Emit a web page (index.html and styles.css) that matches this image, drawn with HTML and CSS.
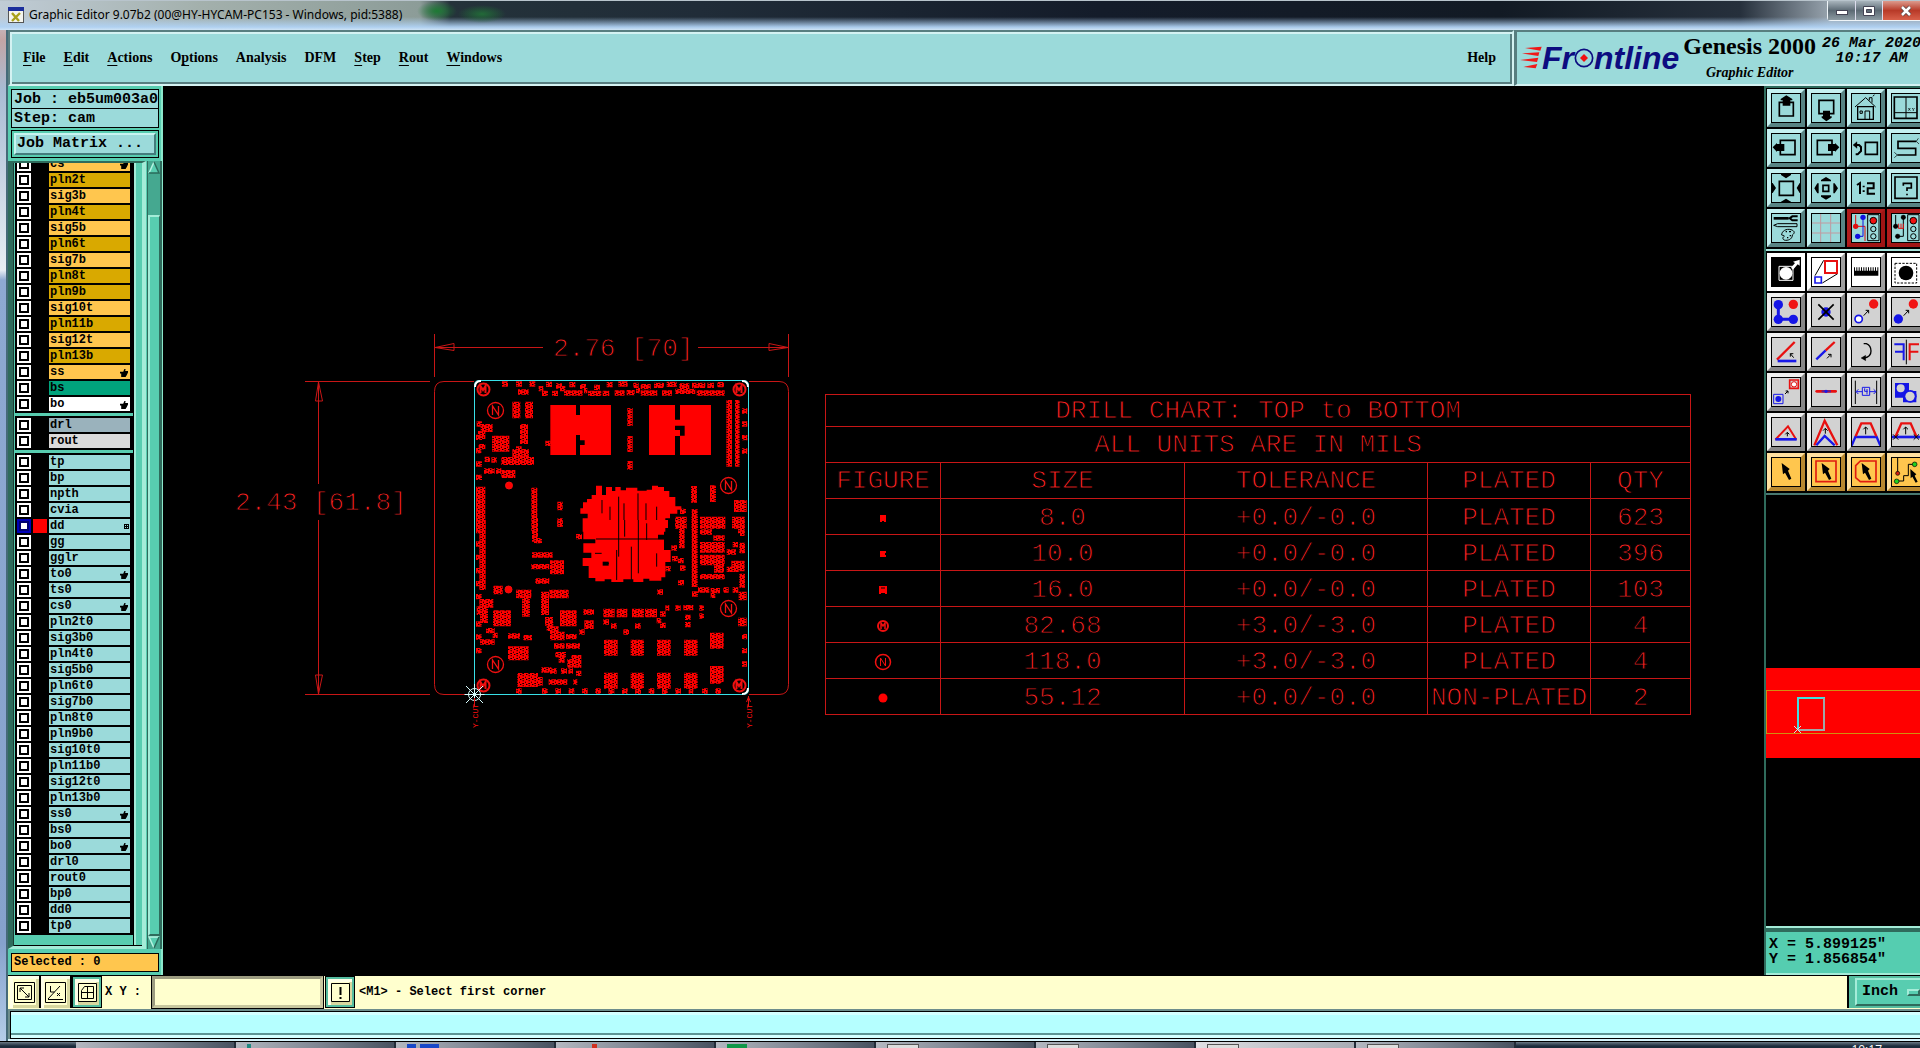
FILE: index.html
```html
<!DOCTYPE html>
<html lang="en">
<head>
<meta charset="utf-8">
<title>Graphic Editor 9.07b2</title>
<link rel="stylesheet" href="styles.css">
</head>
<body>
<header class="titlebar">
  <svg class="appicon" width="16" height="16" viewBox="0 0 16 16"><rect x=".5" y=".5" width="15" height="15" fill="#f4f4ee" stroke="#555"/><rect width="16" height="4" fill="#1b2e9c"/><path d="M4 6l7 8M12 6l-8 8" stroke="#a8a01a" stroke-width="2.4"/></svg>
  <h1>Graphic Editor 9.07b2 (00@HY-HYCAM-PC153 - Windows, pid:5388)</h1>
  <div class="winbuttons">
    <button class="min" aria-label="Minimize"><svg width="14" height="12"><rect x="1.500" y="5.500" width="11" height="4" fill="#fff" stroke="#445"/></svg></button>
    <button class="max" aria-label="Maximize"><svg width="14" height="12"><path fill="#fff" stroke="#445" fill-rule="evenodd" d="M1.500 1.500h11v9h-11zM4.500 4.500h5v3h-5z"/></svg></button>
    <button class="close" aria-label="Close"><svg width="14" height="12"><path d="M3 2l8 8M11 2l-8 8" stroke="#544" stroke-width="4"/><path d="M3 2l8 8M11 2l-8 8" stroke="#fff" stroke-width="2.500"/></svg></button>
  </div>
</header>

<div class="window">
  <div class="top">
    <nav class="menubar">
      <button><u>F</u>ile</button><button><u>E</u>dit</button><button><u>A</u>ctions</button><button>O<u>p</u>tions</button><button>Analysis</button><button>DFM</button><button><u>S</u>tep</button><button><u>R</u>out</button><button><u>W</u>indows</button>
      <button class="help">Help</button>
    </nav>
    <div class="brand">
      <div class="logo">
        <svg width="22" height="24" viewBox="0 0 66 72"><g fill="#f01818"><path d="M15 6l50-4-4 12zM6 22l52-3-3 11zM0 42l55-7-4 13zM10 63l42-9-5 13z"/></g></svg>
        <span>Fr</span><svg width="20" height="22" viewBox="0 0 60 66"><circle cx="30" cy="36" r="26" fill="none" stroke="#0c0c80" stroke-width="5"/><path d="M30 24l12 12-12 12-12-12z" fill="#f01010"/></svg><span>ntline</span>
      </div>
      <div class="product"><strong>Genesis 2000</strong><em>Graphic Editor</em></div>
      <div class="clock"><span>26 Mar 2020</span><span>10:17 AM</span></div>
    </div>
  </div>

  <div class="main">
    <aside class="layers">
      <div class="info">Job : eb5um003a0</div>
      <div class="info second">Step: cam</div>
      <div class="matrix"><button>Job Matrix ...</button></div>
      <div class="scroller">
        <div class="list">
          <ul>
            <li class="sig hand"><label><input type="checkbox"><i></i><b>cs</b></label></li>
            <li class="pln"><label><input type="checkbox"><i></i><b>pln2t</b></label></li>
            <li class="sig"><label><input type="checkbox"><i></i><b>sig3b</b></label></li>
            <li class="pln"><label><input type="checkbox"><i></i><b>pln4t</b></label></li>
            <li class="sig"><label><input type="checkbox"><i></i><b>sig5b</b></label></li>
            <li class="pln"><label><input type="checkbox"><i></i><b>pln6t</b></label></li>
            <li class="sig"><label><input type="checkbox"><i></i><b>sig7b</b></label></li>
            <li class="pln"><label><input type="checkbox"><i></i><b>pln8t</b></label></li>
            <li class="pln"><label><input type="checkbox"><i></i><b>pln9b</b></label></li>
            <li class="sig"><label><input type="checkbox"><i></i><b>sig10t</b></label></li>
            <li class="pln"><label><input type="checkbox"><i></i><b>pln11b</b></label></li>
            <li class="sig"><label><input type="checkbox"><i></i><b>sig12t</b></label></li>
            <li class="pln"><label><input type="checkbox"><i></i><b>pln13b</b></label></li>
            <li class="sig hand"><label><input type="checkbox"><i></i><b>ss</b></label></li>
            <li class="green"><label><input type="checkbox"><i></i><b>bs</b></label></li>
            <li class="white hand"><label><input type="checkbox"><i></i><b>bo</b></label></li>
          </ul>
          <ul>
            <li class="drill"><label><input type="checkbox"><i></i><b>drl</b></label></li>
            <li class="rout"><label><input type="checkbox"><i></i><b>rout</b></label></li>
          </ul>
          <ul>
            <li><label><input type="checkbox"><i></i><b>tp</b></label></li>
            <li><label><input type="checkbox"><i></i><b>bp</b></label></li>
            <li><label><input type="checkbox"><i></i><b>npth</b></label></li>
            <li><label><input type="checkbox"><i></i><b>cvia</b></label></li>
            <li class="current"><label><input type="checkbox" checked><i></i><b>dd</b></label></li>
            <li><label><input type="checkbox"><i></i><b>gg</b></label></li>
            <li><label><input type="checkbox"><i></i><b>gglr</b></label></li>
            <li class="hand"><label><input type="checkbox"><i></i><b>to0</b></label></li>
            <li><label><input type="checkbox"><i></i><b>ts0</b></label></li>
            <li class="hand"><label><input type="checkbox"><i></i><b>cs0</b></label></li>
            <li><label><input type="checkbox"><i></i><b>pln2t0</b></label></li>
            <li><label><input type="checkbox"><i></i><b>sig3b0</b></label></li>
            <li><label><input type="checkbox"><i></i><b>pln4t0</b></label></li>
            <li><label><input type="checkbox"><i></i><b>sig5b0</b></label></li>
            <li><label><input type="checkbox"><i></i><b>pln6t0</b></label></li>
            <li><label><input type="checkbox"><i></i><b>sig7b0</b></label></li>
            <li><label><input type="checkbox"><i></i><b>pln8t0</b></label></li>
            <li><label><input type="checkbox"><i></i><b>pln9b0</b></label></li>
            <li><label><input type="checkbox"><i></i><b>sig10t0</b></label></li>
            <li><label><input type="checkbox"><i></i><b>pln11b0</b></label></li>
            <li><label><input type="checkbox"><i></i><b>sig12t0</b></label></li>
            <li><label><input type="checkbox"><i></i><b>pln13b0</b></label></li>
            <li class="hand"><label><input type="checkbox"><i></i><b>ss0</b></label></li>
            <li><label><input type="checkbox"><i></i><b>bs0</b></label></li>
            <li class="hand"><label><input type="checkbox"><i></i><b>bo0</b></label></li>
            <li><label><input type="checkbox"><i></i><b>drl0</b></label></li>
            <li><label><input type="checkbox"><i></i><b>rout0</b></label></li>
            <li><label><input type="checkbox"><i></i><b>bp0</b></label></li>
            <li><label><input type="checkbox"><i></i><b>dd0</b></label></li>
            <li><label><input type="checkbox"><i></i><b>tp0</b></label></li>
          </ul>
        </div>
        <div class="scrollbar">
          <svg width="12" height="13"><path d="M6 1L1 12h10z" fill="#58cdb0"/><path d="M6 1L1 12" stroke="#b8f4e2" stroke-width="1.500"/><path d="M6 1l5 11H1" fill="none" stroke="#2a6a5a" stroke-width="1.500"/></svg>
          <div class="thumb"></div>
          <svg width="12" height="13"><path d="M1 1h10L6 12z" fill="#58cdb0"/><path d="M11 1H1l5 11" fill="none" stroke="#b8f4e2" stroke-width="1.500"/><path d="M11 1L6 12" stroke="#2a6a5a" stroke-width="1.500"/></svg>
        </div>
      </div>
      <div class="selected">Selected : 0</div>
    </aside>

    <main class="canvas">
      <svg class="board" width="600" height="420" viewBox="220 320 600 420">
        <defs>
          <pattern id="pads" width="18" height="15" patternUnits="userSpaceOnUse"><rect width="18" height="15" fill="#f00"/><path d="M8 0h3v4h-3zM7 9h5v3h-5zM0 12h4v3h-4zM15 5h3v3h-3z" fill="#000"/></pattern>
        </defs>
        <g class="thin">
          <path d="M434.500 334v43M788.500 334v43M435 347.500h108M698 347.500h90M305 381.500h125M305 694.500h125M318.500 382v102M318.500 520v174"/>
          <path d="M435 347.500l19-4v7zM788 347.500l-19-4v7zM318.500 382l-3 19h7zM318.500 694l-3-19h7z"/>
          <path d="M474 381.500h-30q-9.500 0-9.500 10v293q0 10 9.500 10h30M749 381.500h30q9.500 0 9.500 10v293q0 10-9.500 10h-30"/>
        </g>
        <g class="dims"><text x="553" y="356">2.76 [70]</text><text x="235" y="510">2.43 [61.8]</text></g>

        <g transform="translate(430 320) scale(.33333)">
          <g class="pads">
            <path stroke-width="16" d="M216 192h18M258 192h18M298 192h18M348 193h18M378 198h18M418 194h18M450 200h18M492 202h18M530 194h18M565 192h28M610 196h16M632 200h30M672 196h30M710 193h30M748 198h30M786 196h40M832 196h20M862 194h20M264 216h32M326 206h14M336 220h18M366 220h18M390 206h16M402 219h56M462 212h10M474 220h40M518 220h20M554 219h30M590 218h24M618 212h12M632 219h50M696 219h30M736 214h60M800 219h84M140 312h16M138 352h18M146 380h20M138 392h16M138 432h18M138 472h18M164 418h16M184 420h16M162 453h32M198 453h16M346 370h16M936 273h16M936 312h16M936 353h16M936 393h16M750 574h18M736 598h34M736 618h34"/>
            <path stroke-width="50" d="M247 270h24M285 270h24M783 523h18M840 521h18"/>
            <path stroke-width="24" d="M152 324h36M144 345h22M214 423h98M247 400h50M214 462h42"/>
            <path stroke-width="48" d="M186 371h52M592 372h16"/>
            <path stroke-width="60" d="M270 342h24"/>
            <path stroke-width="14" d="M258 386h17M250 394h36"/>
            <path stroke-width="54" d="M592 291h16"/>
            <path stroke-width="26" d="M592 436h16M382 558h16M382 608h16"/>
            <path stroke-width="200" d="M889 340h17M915 340h14"/>
            <path stroke-width="130" d="M138 565h28M304 568h18"/>
            <path stroke-width="36" d="M912 558h38M810 608h76M906 608h38"/>
            <path stroke-width="65" d="M785 600h18"/>
          </g>
          <g fill="#f00">
            <path d="M361 255h77v30h12v-30h93v150h-93v-30h14v-14h-14v-16h-12v60h-77zM438 300h12v14h-12zM657 255h78v44h15v-44h93v150h-93v-58h14v-30h-29v88h-78zM735 330h15v18h-15z"/>
            <path d="M498 497h18v28h12v-24h18v12h10v-12h16v10h16v-8h34v9h28v-3h16v-12h18v4h18v12h16v18h18v28h18v10h-12v12h-22v14h-14v40H458v-40h15v-14h-22v-16h8v-18h12v-10h14v-12h13z"/>
          </g>
          <path stroke="#000" stroke-width="3" d="M566 530v100M582 550v80M624 520v110M648 550v80M516 540v40M540 560v40M680 560v50"/>
        </g>

        <g transform="translate(430 520) scale(.33333)">
          <g class="pads">
            <path stroke-width="210" d="M148 105h19M785 96h18"/>
            <path stroke-width="16" d="M138 32h14M138 72h14M138 112h14M138 152h14M138 191h14M138 230h17M138 312h17M138 351h17M138 392h17M312 62h24M306 105h62M316 183h42M438 50h18M304 140h54M382 10h16M234 348h36M280 353h26M408 350h32M372 378h32M408 378h42M376 404h32M334 450h30M360 453h20M393 453h18M415 453h14M356 486h56M430 486h12M258 513h17M336 513h17M376 513h17M416 513h17M456 513h17M496 513h17M536 513h17M576 513h17M616 513h17M656 513h17M696 513h17M736 513h17M816 513h17M856 513h17M682 216h17M520 306h17M543 318h17M580 336h17M615 318h17M448 336h16M460 276h32M690 316h17M690 282h17M706 264h12M736 264h16M760 263h30M808 264h14M808 288h14M765 292h17M765 314h17M680 302h14M804 210h34M842 212h28M880 210h16M908 210h17M744 188h18M936 350h15M936 392h15M936 432h15M750 144h17M706 146h16M726 116h17M744 122h17M724 84h17M810 36h36M850 54h34M908 74h16M890 96h28M890 148h36M810 170h74M930 40h14M438 460h16M386 420h18M168 332h26M188 346h15M150 366h44M786 222h18M842 226h14"/>
            <path stroke-width="70" d="M306 30h18M747 50h17M276 255h24M333 250h24"/>
            <path stroke-width="42" d="M360 142h42M928 182h17M924 20h20M262 480h62M234 400h62"/>
            <path stroke-width="48" d="M189 295h54M390 295h50M522 383h41M602 383h40M681 383h41M762 383h41M840 362h41M840 462h41M522 482h41M602 482h40M681 482h41M762 482h41"/>
            <path stroke-width="26" d="M190 210h28M258 222h46M358 222h58M520 279h34M560 279h32M606 279h36M645 279h36M463 314h28M148 250h42M140 272h34M150 296h24M360 348h44M345 304h24M350 320h20M360 332h26M924 306h26M324 484h14M736 12h32M810 12h74M412 430h42M424 418h30M536 508h14M616 508h14M696 508h14M776 508h14M840 478h34M926 228h24"/>
            <path stroke-width="32" d="M810 82h74M928 84h17M810 120h74M904 138h40M852 142h30"/>
          </g>
          <path fill="#f00" d="M460 0h254v24h-12v20h-18v14h18v32h20v36h-16v46h-12v10h-36v-6h-18v10h-30v-8h-30v8h-36v-8h-20v6h-28v-10h-20v-36h-18v-24h26v-16h-24v-28h36v-12h-36z"/>
          <path stroke="#000" stroke-width="3" fill="none" d="M498 57h204M566 0v110M584 0v50M625 0v160M650 10v50M520 130h17M604 80v100M560 90v90M495 100h20M680 100v40"/>
          <path fill="#000" d="M518 125h18v12h-18z"/>
        </g>

        <g class="holes">
          <g stroke-width="2"><circle cx="483.500" cy="389.500" r="6"/><circle cx="739.500" cy="389.500" r="6"/><circle cx="483.500" cy="685.500" r="6"/><circle cx="739.500" cy="685.500" r="6"/><path d="M480.500 393v-7l2.500 4 2.500-4v7M736.500 393v-7l2.500 4 2.500-4v7M480.500 689v-7l2.500 4 2.500-4v7M736.500 689v-7l2.500 4 2.500-4v7"/></g>
          <g stroke-width="1.300"><circle cx="495.500" cy="410.500" r="8"/><circle cx="728.500" cy="485.500" r="8"/><circle cx="728.500" cy="608.500" r="8"/><circle cx="495.500" cy="664.500" r="8"/><path d="M492.500 415v-9l6 9v-9M725.500 490v-9l6 9v-9M725.500 613v-9l6 9v-9M492.500 669v-9l6 9v-9"/></g>
          <g fill="#f00"><circle cx="509" cy="485.500" r="3.500"/><circle cx="508.500" cy="589.500" r="3.500"/></g>
        </g>
        <path class="profile" d="M479 380.500h265q4.500 0 4.500 5v304q0 5-5 5H474.500v-309q0-5 4.500-5z"/>
        <path class="corners" d="M475 387q0-6 6-6M748 387q0-6-6-6M748 688q0 6-6 6"/>
        <g class="origin"><path d="M464.500 694.500h20M474.500 684v20M466 686l17 17M483 686l-17 17"/><circle cx="474.500" cy="694.500" r="6"/></g>
        <g class="cuts"><path d="M474.500 698v8M748.500 696v10M746.500 702l2-5 2 5"/><text transform="translate(478 728) rotate(-90)">Y-CUT</text><text transform="translate(752 728) rotate(-90)">Y-CUT</text></g>
      </svg>

      <table class="chart">
        <colgroup><col class="c1"><col class="c2"><col class="c3"><col class="c4"><col class="c5"></colgroup>
        <thead>
          <tr class="title"><th colspan="5">DRILL CHART: TOP to BOTTOM</th></tr>
          <tr><th colspan="5">ALL UNITS ARE IN MILS</th></tr>
          <tr><th>FIGURE</th><th>SIZE</th><th>TOLERANCE</th><th>PLATED</th><th>QTY</th></tr>
        </thead>
        <tbody>
          <tr><td><svg width="18" height="18"><path d="M6 6h6v7h-2v-1H8v1H6z" fill="#f00"/></svg></td><td>8.0</td><td>+0.0/-0.0</td><td>PLATED</td><td>623</td></tr>
          <tr><td><svg width="18" height="18"><path d="M6 6h6v2h-1v2h1v2H6z" fill="#f00"/></svg></td><td>10.0</td><td>+0.0/-0.0</td><td>PLATED</td><td>396</td></tr>
          <tr><td><svg width="18" height="18"><path d="M5 5h8v8h-2v-1H7v1H5z" fill="#f00"/><path d="M7 7h4" stroke="#000"/></svg></td><td>16.0</td><td>+0.0/-0.0</td><td>PLATED</td><td>103</td></tr>
          <tr><td><svg width="18" height="18" class="hole"><circle cx="9" cy="9" r="5" stroke-width="2"/><path d="M7 12V6l2 3 2-3v6" stroke-width="1.500"/></svg></td><td>82.68</td><td>+3.0/-3.0</td><td>PLATED</td><td>4</td></tr>
          <tr><td><svg width="18" height="18" class="hole"><circle cx="9" cy="9" r="7.500" stroke-width="1.500"/><path d="M6.500 13V5l5 8V5"/></svg></td><td>118.0</td><td>+3.0/-3.0</td><td>PLATED</td><td>4</td></tr>
          <tr><td><svg width="18" height="18"><circle cx="9" cy="9" r="4.500" fill="#f00"/></svg></td><td>55.12</td><td>+0.0/-0.0</td><td>NON-PLATED</td><td>2</td></tr>
        </tbody>
      </table>
    </main>

    <aside class="tools">
      <div class="grid view">
        <button aria-label="Pan up"><svg viewBox="12 12 90 90"><path d="M37 40h42v41H37z" fill="none" stroke="#000" stroke-width="5"/><path d="M58 19l18 11v4h-6v16H47V34h-6v-4z"/></svg></button>
        <button aria-label="Pan down"><svg viewBox="12 12 90 90"><path d="M36 34h44v40H36z" fill="none" stroke="#000" stroke-width="5"/><path d="M58 97L44 86v-4h4V65h21v17h5v4z"/></svg></button>
        <button aria-label="Home"><svg viewBox="12 12 90 90" class="ln"><path d="M24 54l32-28 30 28M67 34V26h8v15M78 22l4-5" stroke-width="3"/><path d="M32 53h47v38H32z" stroke-width="4"/><path d="M54 91V66h14v25M39 66h7v7h-7z" stroke-width="3"/></svg></button>
        <button aria-label="Axes"><svg viewBox="12 12 90 90" class="ln"><path d="M22 24h68v64H22z" stroke-width="5"/><path d="M57 24v64M22 71h68" stroke-width="3"/><path d="M64 57l6 8M70 57l-6 8M75 57l4 4 4-4M79 61v5" stroke-width="2"/></svg></button>
        <button aria-label="Pan left"><svg viewBox="12 12 90 90"><path d="M40 34h44v43H40z" fill="none" stroke="#000" stroke-width="5"/><path d="M17 55l13-13v3h22v21H30v3z"/></svg></button>
        <button aria-label="Pan right"><svg viewBox="12 12 90 90"><path d="M31 34h44v43H31z" fill="none" stroke="#000" stroke-width="5"/><path d="M97 55L84 42v3H63v21h21v3z"/></svg></button>
        <button aria-label="Previous view"><svg viewBox="12 12 90 90" class="ln"><path d="M55 40h36v36H55z" stroke-width="5"/><path d="M24 48h12l6 6v12L32 76h-6" stroke-width="6"/><path d="M18 48l12-10v20z" fill="#000"/></svg></button>
        <button aria-label="Serpentine"><svg viewBox="12 12 90 90" class="ln"><path d="M88 37H33v21h53v20H31" stroke-width="5"/><path d="M94 28l-6 9 8 8M22 70l9 8-9 8" stroke-width="2"/></svg></button>
        <button aria-label="Zoom in"><svg viewBox="12 12 90 90"><path d="M37 37h42v42H37z" fill="none" stroke="#000" stroke-width="5"/><path d="M42 15h30v3L57 28 42 18zM42 101h30v-3L57 89l-15 9zM14 42v30h3l10-15-10-15zM101 42v30h-3L89 57l9-15z"/></svg></button>
        <button aria-label="Zoom out"><svg viewBox="12 12 90 90"><path d="M48 49h17v18H48z" fill="none" stroke="#000" stroke-width="5"/><path d="M42 37h30v-4L57 24l-15 9zM42 79h30v4L57 92l-15-9zM35 43v30h-4L22 58l9-15zM79 43v30h4l10-15-10-15z"/></svg></button>
        <button aria-label="Scale one to two"><svg viewBox="12 12 90 90" class="ln"><path d="M30 48l9-6v33M50 50v5M50 64v5M60 43h20v15H62v16h22" stroke-width="6"/></svg></button>
        <button aria-label="Query"><svg viewBox="12 12 90 90" class="ln"><path d="M24 24h66v64H24z" stroke-width="5"/><path d="M49 50v-7h24v14H60v9M60 74v5" stroke-width="5"/></svg></button>
        <button aria-label="Options"><svg viewBox="12 12 90 90" class="ln"><path d="M20 28h45" stroke-width="8"/><path d="M92 22H76l-8 6 8 6h16" stroke-width="6"/><path d="M20 49l12-5h58v9H32z" stroke-width="3"/><path d="M44 78c0-12 14-20 28-16 12 4 12 10 4 16 0 10-8 16-20 16-8 0-12-8-4-12 0-4-6-2-8-4z" stroke-width="3"/><path d="M56 68h4M66 68h6M60 86h4M68 80h4" stroke-width="4"/></svg></button>
        <button aria-label="Grid"><svg viewBox="12 12 90 90"><path d="M41 12v90M71 12v90M12 42h90M12 72h90" stroke="#c09aa0" stroke-width="3"/></svg></button>
        <button class="red" aria-label="Nets"><svg viewBox="12 12 90 90" class="ln"><path d="M26 18v34h28v44" stroke="#e01010" stroke-width="3"/><path d="M48 24v58H32" stroke="#1010e0" stroke-width="3"/><circle cx="48" cy="25" r="8" fill="#1010e0" stroke="none"/><circle cx="32" cy="82" r="8" fill="#1010e0" stroke="none"/><circle cx="26" cy="52" r="8" fill="#e01010" stroke="none"/><path d="M62 17h34v78H62z" stroke-width="3"/><circle cx="79" cy="35" r="10" fill="#f01010" stroke-width="3"/><circle cx="79" cy="60" r="8" stroke-width="3"/><circle cx="79" cy="82" r="8" stroke-width="3"/></svg></button>
        <button class="red" aria-label="Net compare"><svg viewBox="12 12 90 90" class="ln"><path d="M26 18v34M49 24v58H32" stroke-width="3"/><path d="M34 58h16M35 58V44M42 58V44M49 58V44" stroke="#e01010" stroke-width="3"/><circle cx="49" cy="25" r="7" fill="#000"/><circle cx="32" cy="82" r="7" fill="#000"/><circle cx="26" cy="52" r="7" fill="#000"/><path d="M62 17h34v78H62z" stroke-width="3"/><circle cx="79" cy="35" r="10" fill="#f01010" stroke-width="3"/><circle cx="79" cy="60" r="8" stroke-width="3"/><circle cx="79" cy="82" r="8" stroke-width="3"/></svg></button>
      </div>
      <div class="grid edit">
        <button class="on" aria-label="Zoom window"><svg viewBox="12 12 90 90"><path d="M12 12h90v90H12z"/><path d="M36 40h42v42H36z" fill="none" stroke="#fff" stroke-width="3"/><circle cx="57" cy="61" r="19" fill="#fff"/><path d="M72 44l12-14-6-4 20-6v18l-6-4-14 16z" fill="#fff"/></svg></button>
        <button class="white" aria-label="Resize"><svg viewBox="12 12 90 90" class="ln"><path d="M24 68l26-46M46 90l46-28" stroke-width="3"/><path d="M54 24h36v36H54z" stroke="#e81010" stroke-width="6"/><path d="M24 72h19v18H24z" stroke="#1818e8" stroke-width="5"/></svg></button>
        <button class="white" aria-label="Measure"><svg viewBox="12 12 90 90"><path d="M21 43h3v10h4V43h3v10h4V43h3v10h4V43h3v10h4V43h3v10h4V43h3v10h4V43h3v10h4V43h3v10h4V43h3v10h4V43h3v10h4V43h3v25H21z"/></svg></button>
        <button class="white" aria-label="Select feature"><svg viewBox="12 12 90 90"><path d="M24 31h65v59H24z" fill="none" stroke="#000" stroke-width="3" stroke-dasharray="7 4"/><circle cx="57" cy="60" r="22"/></svg></button>
        <button aria-label="Chain"><svg viewBox="12 12 90 90" fill="#1515e6"><path d="M34 35v44h45" fill="none" stroke="#1515e6" stroke-width="9"/><circle cx="34" cy="35" r="14"/><circle cx="34" cy="79" r="14"/><circle cx="79" cy="79" r="14"/><circle cx="79" cy="34" r="14" fill="#f01414"/></svg></button>
        <button aria-label="Delete"><svg viewBox="12 12 90 90"><circle cx="57" cy="57" r="14" fill="#1515e6"/><path d="M34 34l46 46M80 34L34 80" stroke="#000" stroke-width="5"/></svg></button>
        <button aria-label="Copy"><svg viewBox="12 12 90 90"><circle cx="35" cy="78" r="11" fill="#fff" stroke="#1515e6" stroke-width="5"/><circle cx="80" cy="33" r="14" fill="#f01414"/><path class="arr" d="M50 68l15-16M56 52h9v9"/></svg></button>
        <button aria-label="Move"><svg viewBox="12 12 90 90"><circle cx="34" cy="78" r="14" fill="#1515e6"/><circle cx="79" cy="33" r="14" fill="#f01414"/><path class="arr" d="M50 68l15-16M56 52h9v9"/></svg></button>
        <button aria-label="Rotate line"><svg viewBox="12 12 90 90" class="ln"><path d="M30 80l53-53" stroke="#e81010" stroke-width="7"/><path d="M32 84h56" stroke="#1818e8" stroke-width="8"/><path class="arr" d="M80 74L70 62M70 71v-9h9"/></svg></button>
        <button aria-label="Extend line"><svg viewBox="12 12 90 90" class="ln"><path d="M28 79l28-27" stroke="#1818e8" stroke-width="7"/><path d="M56 52l27-25" stroke="#e81010" stroke-width="7"/><path class="arr" d="M60 76l12-12M63 64h9v9"/></svg></button>
        <button aria-label="Rotate"><svg viewBox="12 12 90 90" class="ln"><path d="M50 32h8q14 6 14 22 0 18-20 21" stroke-width="4"/><path d="M42 75l14-8v16z" fill="#000"/></svg></button>
        <button aria-label="Mirror"><svg viewBox="12 12 90 90" class="ln"><path d="M58 20v74" stroke-width="3"/><path d="M22 34h28v48M24 56h26" stroke="#1818e8" stroke-width="6"/><path d="M96 34H68v48M94 56H68" stroke="#e81010" stroke-width="6"/></svg></button>
        <button aria-label="Copy symbol"><svg viewBox="12 12 90 90" class="ln"><path d="M20 64h28v28H20z" stroke="#1818e8" stroke-width="3"/><circle cx="34" cy="78" r="9" fill="#1818e8" stroke="none"/><path d="M68 21h26v25H68z" stroke="#e81010" stroke-width="5"/><circle cx="81" cy="34" r="8" fill="#fff" stroke="#e81010" stroke-width="3"/><path class="arr" d="M54 63l9-9M56 54h7v7"/></svg></button>
        <button aria-label="Break line"><svg viewBox="12 12 90 90"><path d="M29 55h57" stroke="#e81010" stroke-width="8" stroke-linecap="round"/><path d="M44 55h28" stroke="#602090" stroke-width="6"/><circle cx="57" cy="55" r="5" fill="#1818e8"/></svg></button>
        <button aria-label="Spacing"><svg viewBox="12 12 90 90" class="ln"><path d="M25 23v70M89 23v70" stroke-width="3"/><path d="M46 43h22v24H46zM28 56h18M68 56h18M34 49l-7 7 7 7M80 49l7 7-7 7M53 46v9h9M60 48v16" stroke="#1818e8" stroke-width="3"/></svg></button>
        <button aria-label="Merge surfaces"><svg viewBox="12 12 90 90" fill="#1515e6"><path d="M24 30h42v24h22v34H48V74H24z"/><circle cx="70" cy="70" r="19"/><circle cx="41" cy="46" r="12" fill="#d2d2d2"/><circle cx="69" cy="70" r="14" fill="#d2d2d2"/></svg></button>
        <button aria-label="Triangle"><svg viewBox="12 12 90 90" class="ln"><path d="M25 80l38-40 25 40" stroke="#e81010" stroke-width="6"/><path d="M25 79h64" stroke="#1818e8" stroke-width="8"/><path class="arr" d="M61 70V58M55 64l6-6 6 6"/></svg></button>
        <button aria-label="Peak"><svg viewBox="12 12 90 90" class="ln"><path d="M22 97l31-74 38 74" stroke="#e81010" stroke-width="7"/><path d="M28 97l25-28 30 28" stroke="#1818e8" stroke-width="7"/><path class="arr" d="M55 62V46M48 53l7-7 7 7"/></svg></button>
        <button aria-label="Trapezoid"><svg viewBox="12 12 90 90" class="ln"><path d="M14 98l11-26h64l11 26" stroke="#1818e8" stroke-width="7"/><path d="M26 70l17-39h28l17 39" stroke="#e81010" stroke-width="7"/><path class="arr" d="M56 64V42M49 49l7-7 7 7"/></svg></button>
        <button aria-label="Trapezoid on line"><svg viewBox="12 12 90 90" class="ln"><path d="M14 72h86" stroke="#1818e8" stroke-width="8"/><path d="M26 70l17-39h28l17 39" stroke="#e81010" stroke-width="7"/><path d="M18 64l16 16M34 64L18 80M80 64l16 16M96 64L80 80" stroke-width="3"/><path class="arr" d="M56 64V42M49 49l7-7 7 7"/></svg></button>
        <button class="yellow" aria-label="Select"><svg viewBox="12 12 90 90"><path d="M44 30l24 18-5 5 10 24-7 4-12-22-6 5z"/></svg></button>
        <button class="yellow" aria-label="Select in frame"><svg viewBox="12 12 90 90"><path d="M27 24h60v62H27z" fill="none" stroke="#e01c10" stroke-width="5"/><path d="M44 30l24 18-5 5 10 24-7 4-12-22-6 5z"/></svg></button>
        <button class="yellow" aria-label="Select in polygon"><svg viewBox="12 12 90 90"><path d="M40 24h47v62H40L26 74V38z" fill="none" stroke="#e01c10" stroke-width="5"/><path d="M44 30l24 18-5 5 10 24-7 4-12-22-6 5z"/></svg></button>
        <button class="yellow" aria-label="Select net"><svg viewBox="12 12 90 90" class="ln"><path d="M32 12v48M32 84h18V68h14V34h16" stroke-width="3"/><circle cx="32" cy="61" r="6" fill="#d02010" stroke-width="2"/><circle cx="29" cy="85" r="7" fill="#20d020" stroke-width="2"/><circle cx="83" cy="34" r="7" fill="#20d020" stroke-width="2"/><path d="M70 48l18 16-5 4 9 18-6 3-10-18-5 5z" fill="#000" stroke="none"/></svg></button>
      </div>
      <div class="overview">
        <div class="band"><div class="extent"><svg width="34" height="40"><path d="M5 35V3h27" fill="none" stroke="#40e0e0" stroke-width="2"/><path d="M31 3v32H5" fill="none" stroke="#a0a8a8" stroke-width="2"/><path d="M1 31l7 7M8 31l-7 7" stroke="#d0e8e8"/></svg></div></div>
      </div>
      <div class="coords"><span>X = 5.899125"</span><span>Y = 1.856854"</span></div>
    </aside>
  </div>

  <div class="status">
    <button class="sq" aria-label="Diagonal"><svg width="23" height="23" class="ln"><path d="M1.500 1.500h20v20h-20zM4.500 4.500h14v14h-14z"/><path d="M7 7l9 9M7 11V7h4M16 12v4h-4"/></svg></button>
    <button class="sq" aria-label="Angle"><svg width="23" height="23" class="ln"><path d="M1.500 1.500h20v20h-20z"/><path d="M4 18.500h15M4 18L16 5M6.500 5v6h4M13 12l3 3M16 12l-3 3"/></svg></button>
    <button class="sq green" aria-label="Grid snap"><svg width="19" height="19" class="ln"><path d="M.500.500h18v18H.500zM3.500 7.500l3-4h9v12h-12zM9.500 3v12M3 9.500h12"/></svg></button>
    <label for="xy">X Y :</label>
    <input id="xy" type="text">
    <button class="sq green alert" aria-label="Alert"><svg width="19" height="19" class="ln"><path d="M.500.500h18v18H.500z"/><path d="M9.500 4v8M9.500 14v2" stroke-width="2"/></svg></button>
    <output>&lt;M1&gt; - Select first corner</output>
    <div class="units"><button>Inch <i></i></button></div>
  </div>
  <div class="message"><div></div></div>
</div>

<footer class="taskbar">
  <button class="task" aria-label="Task 1"></button><button class="task teal" aria-label="Task 2"></button><button class="task blue" aria-label="Task 3"></button><button class="task redmark" aria-label="Task 4"></button><button class="task greenmark" aria-label="Task 5"></button><button class="task doc" aria-label="Task 6"></button><button class="task doc" aria-label="Task 7"></button><button class="task doc light" aria-label="Task 8"></button><button class="task doc" aria-label="Task 9"></button>
  <time>10:17</time>
</footer>
</body>
</html>
```
FILE: styles.css
```css
* { box-sizing: border-box; }
body {
  margin: 0;
  height: 100vh;
  overflow: hidden;
  display: flex;
  flex-direction: column;
  background: linear-gradient(#c9d6e4, #c3a5a5 40px, #a9bcd4 90px, #e8eef4 270px, #8ea9d2 280px, #86a2cc 90%, #b8d0ea);
  color: #000;
  font: bold 12px/14px "Liberation Mono", monospace;
}
button { margin: 0; padding: 0; border: 0; background: none; color: inherit; font: inherit; text-align: left; border-radius: 0; }
svg { display: block; flex: none; }
.ln { fill: none; stroke: #000; }
.arr { fill: none; stroke: #000; stroke-width: 3; }

/* window caption */
.titlebar {
  flex: none;
  height: 30px;
  display: flex;
  align-items: center;
  padding: 0 0 2px 8px;
  border-top: 1px solid #b8c4cc;
  overflow: hidden;
  background:
    radial-gradient(20px 10px at 437px 10px, #1d7a34, transparent),
    radial-gradient(24px 9px at 482px 13px, #226a38, transparent),
    linear-gradient(transparent 16px, rgba(176, 210, 244, .95) 26px, #cfe4f6),
    linear-gradient(90deg, #c0ccd6, #a3b0ac 200px, #8c9c98 420px, #24323a 450px, #202c38 700px, #141c2a 1100px, #121a24 1500px, #26303c 1740px, #98a4ae 1830px);
}
.titlebar h1 { margin: 0 0 0 5px; font: 13px/16px "Noto Sans", sans-serif; font-size: 12px; white-space: nowrap; }
.winbuttons { margin: 0 -10px auto auto; display: flex; border: 1px solid #eef4f8; border-top: 0; border-radius: 0 0 4px 4px; }
.winbuttons button { height: 19px; display: flex; align-items: center; justify-content: center; background: linear-gradient(#a8b4bc, #5c6a74 50%, #8c9aa2); }
.winbuttons .min { width: 27px; }
.winbuttons .max { width: 28px; border-left: 1px solid #dde; border-right: 1px solid #dde; }
.winbuttons .close { width: 46px; background: linear-gradient(#dc9a8c, #b83a28 50%, #d8604a); }

.window { flex: 1; min-height: 0; margin-left: 6px; border-left: 2px solid #456a78; display: flex; flex-direction: column; background: #000; }

/* menu and brand */
.top { flex: none; height: 56px; display: flex; background: #9bdada; font: bold 14px/18px "Liberation Serif", serif; }
.menubar, .brand { border: 2px solid; border-color: #587e80 #d4f2f2 #d4f2f2 #587e80; display: flex; align-items: center; }
.menubar { flex: 1; padding-left: 13px; padding-bottom: 1px; gap: 18px; box-shadow: inset 0 2px #d4f2f2, inset 2px 0 #d4f2f2, inset -2px -2px #587e80; }
.menubar u { text-underline-offset: 3px; text-decoration-thickness: 1px; }
.menubar .help { margin-left: auto; margin-right: 16px; }
.brand { width: 406px; border-left-width: 3px; border-right: 0; overflow: hidden; align-items: flex-start; padding-left: 3px; }
.logo { display: flex; align-items: flex-start; padding-top: 11px; color: #0c0c80; font: italic bold 32px/30px "Liberation Sans", sans-serif; }
.logo svg { margin-top: 3px; }
.logo span { flex: none; }
.product { flex: none; display: flex; flex-direction: column; align-items: center; margin-left: 4px; }
.product strong { font-size: 24px; line-height: 28px; }
.product em { font-size: 14px; line-height: 20px; padding-top: 3px; }
.clock { flex: none; display: flex; flex-direction: column; align-items: center; margin-left: 6px; padding-top: 4px; font: italic bold 15px/15px "Liberation Mono", monospace; }

.main { flex: 1; min-height: 0; display: grid; grid-template-columns: 155px minmax(0, 1fr) 156px; }

/* layer list */
.layers { background: #58cdb0; padding: 3px 2px 3px 3px; border-right: 2px solid #8ce8cc; display: flex; flex-direction: column; min-height: 0; }
.info { flex: none; height: 20px; border: 1px solid #000; background: #9bdada; padding-left: 2px; font-size: 15px; line-height: 19px; white-space: nowrap; overflow: hidden; }
.info.second { height: 19px; border-top: 0; margin-bottom: 2px; }
.matrix { flex: none; border: 1px solid #000; padding: 2px; margin-bottom: 3px; }
.matrix button { display: block; width: 100%; height: 22px; padding-left: 1px; border: 2px solid; border-color: #c8f4f0 #447c7c #447c7c #c8f4f0; background: #9bdada; font-size: 15px; line-height: 18px; }
.scroller { flex: 1; min-height: 0; display: flex; margin-left: -3px; }
.list {
  flex: none;
  width: 138px;
  overflow: hidden;
  border-style: solid;
  border-width: 2px 4px 3px 5px;
  border-color: #2f6b5c #a4ecd8 #a4ecd8 #2f6b5c;
  box-shadow: inset 1px 0 #1c3c34, inset 0 -1px #000;
  padding: 0 9px 11px 2px;
  display: flex;
  flex-direction: column;
  justify-content: flex-end;
  gap: 3px;
  background: linear-gradient(90deg, #58cdb0 120px, #000 120px, #000 121px, #a4ecd8 121px, #a4ecd8 123px, #58cdb0 123px);
}
.list ul { list-style: none; margin: 0; padding: 0 0 2px 2px; background: #000; flex: none; }
.list label { display: flex; align-items: center; gap: 2px; height: 16px; padding: 2px 3px 0 0; }
.list input { appearance: none; margin: 0; width: 14px; height: 14px; background: #fff; box-shadow: inset 0 0 0 2px #fff, inset 0 0 0 4px #000; }
.list i { width: 14px; height: 14px; }
.list b { flex: 1; height: 14px; padding-left: 1px; background: #9bdada; line-height: 14px; }
.list .sig b { background-color: #ffc64e; }
.list .pln b { background-color: #d9a900; }
.list .green b { background-color: #00a37c; }
.list .white b { background-color: #fff; }
.list .drill b { background-color: #9ab2bc; }
.list .rout b { background-color: #dadada; }
.list .current i { background: #f00; }
.list .current input { box-shadow: inset 0 0 0 2px #0000b8, inset 0 0 0 4px #000070; }
.list .hand b, .list .current b { display: flex; justify-content: space-between; }
.list .hand b::after { content: ""; width: 8px; height: 8px; margin: 4px 2px 0 0; background: #000; clip-path: polygon(0 35%, 40% 35%, 55% 0, 70% 0, 65% 25%, 100% 25%, 100% 45%, 85% 75%, 70% 100%, 15% 100%, 15% 55%, 0 55%); }
.list .current b::after { content: ""; width: 5px; height: 5px; margin: 5px 1px 0 0; background: linear-gradient(#000, #000) 2px 0 / 1px 5px no-repeat, linear-gradient(#000, #000) 0 2px / 5px 1px no-repeat; outline: 1px solid #000; outline-offset: -1px; }
.scrollbar { width: 13px; margin: 0 0 0 1px; border-left: 1px solid #2f6b5c; display: flex; flex-direction: column; background: #45a890; box-shadow: 2px 0 #2f6b5c; }
.thumb { flex: 1; margin-top: 41px; background: #58cdb0; border: 2px solid; border-color: #a4ecd8 #2f6b5c #2f6b5c #a4ecd8; border-right-width: 1px; }
.selected { flex: none; height: 19px; margin-top: 4px; border: 1px solid #000; padding-left: 2px; background: #ffc64e; line-height: 17px; }

/* drawing area */
.canvas { position: relative; background: #000; overflow: hidden; }
.board { position: absolute; left: 57px; top: 234px; }
.thin { fill: none; stroke: #c81616; }
.dims { font: 26px "Liberation Mono", monospace; fill: #ff2020; stroke: #000; stroke-width: 1px; }
.pads { fill: none; stroke: url(#pads); }
.holes, .hole { fill: none; stroke: #f01010; }
.profile { fill: none; stroke: #38e0e8; stroke-width: 1; }
.corners { fill: none; stroke: #fff; stroke-width: 2; }
.origin { fill: none; stroke: #d8ffff; }
.cuts { font: 8px "Liberation Mono", monospace; fill: #ff1010; stroke: none; }
.cuts path { fill: none; stroke: #e01010; }
.chart { position: absolute; left: 662px; top: 308px; width: 866px; border-collapse: collapse; table-layout: fixed; color: #ff2020; font: 26px/30px "Liberation Mono", monospace; -webkit-text-stroke: 1px #000; }
.chart th, .chart td { height: 36px; padding: 0; border: 1px solid #c81616; font-weight: normal; text-align: center; white-space: nowrap; }
.chart td { padding-top: 2px; }
.chart .title th { height: 32px; }
.chart td svg { margin: auto; }
.c1 { width: 115px; }
.c2 { width: 244px; }
.c3 { width: 243px; }
.c4 { width: 163px; }
.c5 { width: 100px; }

/* tool palette */
.tools { border-left: 2px solid #2f6b5c; overflow: hidden; display: flex; flex-direction: column; background: #000; }
.grid { flex: none; display: grid; grid-template-columns: repeat(4, 38px); gap: 2px; padding: 3px 0 2px 1px; border-bottom: 2px solid #a8e4dc; }
.view { box-shadow: inset 0 2px #2f6b5c; }
.edit { padding-top: 2px; border-color: #487870; }
.grid button { width: 38px; height: 38px; border: 4px solid; border-color: #c4f0f0 #588484 #588484 #c4f0f0; background: #9bdada; }
.grid svg { width: 30px; height: 30px; outline: 1px solid #000; outline-offset: -1px; }
.grid .red { border-color: #b01c1c #a01414 #a01414 #b01c1c; }
.edit button { border-color: #f0f0f0 #888 #888 #f0f0f0; background: #d2d2d2; }
.edit .white { border-color: #fff #a0a0a0 #a0a0a0 #fff; background: #fff; }
.edit .on { border-color: #fff; background: #000; }
.edit .yellow { border-color: #ffe0a0 #b88830 #b88830 #ffe0a0; background: #ffc64e; }
.overview { flex: 1; padding-top: 173px; }
.band { height: 90px; padding-top: 22px; background: #f00; }
.extent { height: 44px; padding: 4px 0 0 26px; border: 1px solid #d09010; border-right: 0; }
.coords { flex: none; height: 47px; padding: 5px 3px; display: flex; flex-direction: column; border-top: 4px solid #2f6b5c; border-bottom: 2px solid #a4ecd8; box-shadow: 0 -2px #a4ecd8; background: #55cdb0; font-size: 15px; line-height: 15px; font-weight: bold; white-space: nowrap; }

/* command line */
.status { flex: none; height: 34px; display: flex; align-items: stretch; padding: 0 0 1px 2px; border-top: 1px solid #000; background: #ffffce; }
.sq { width: 31px; display: flex; align-items: center; justify-content: center; border-right: 2px solid #000; box-shadow: inset 3px 3px #ffffe8, inset -3px -3px #d8d8a0; }
.sq.green { width: 30px; border: 3px solid #55bda0; outline: 1px solid #000; outline-offset: -1px; }
.status label { width: 50px; padding-left: 3px; line-height: 32px; font-size: 12px; border-right: 1px solid #000; }
.status input { width: 171px; margin: 0 2px 0 0; padding: 4px; border: 3px solid; border-color: #9c9c80 #c8c8a0 #c8c8a0 #9c9c80; background: #ffffce; font: inherit; outline: 1px solid #000; outline-offset: 0; }
.status output { flex: 1; padding-left: 4px; line-height: 32px; }
.units { width: 73px; overflow: hidden; border-left: 2px solid #000; padding: 2px 0 2px 6px; background: #55bda0; }
.units button { display: flex; align-items: center; gap: 9px; width: 80px; height: 28px; padding-left: 5px; border: 2px solid; border-color: #a4ecd8 #2f6b5c #2f6b5c #a4ecd8; background: #58cdb0; font-size: 15px; }
.units i { width: 13px; height: 7px; border: 2px solid; border-color: #a4ecd8 #2f6b5c #2f6b5c #a4ecd8; }
.message { flex: none; height: 32px; padding: 2px 0 0 2px; background: #6e8e8c; border-bottom: 2px solid #d8f4fc; }
.message div { height: 28px; border: 1px solid #000; border-right: 0; background: linear-gradient(#d4ffff 3px, #b5ffff 3px, #b5ffff 21px, #5c9494 21px, #5c9494 23px, #d4ffff 23px); }

/* taskbar */
.taskbar { flex: none; height: 7px; display: flex; overflow: hidden; padding-left: 76px; border-top: 1px solid #000; background: linear-gradient(#6a7884, #1c2c3c 4px); }
.task { width: 160px; margin-left: 0; padding: 0; border-right: 2px solid #222c38; background: linear-gradient(90deg, #b4b8c0, #808894 50%, #485260); }
.task::after { content: ""; display: block; height: 4px; margin: 2px 0 0 11px; width: 20px; }
.teal::after { width: 4px; background: #208880; }
.blue::after { width: 32px; background: linear-gradient(90deg, #1848c8 9px, transparent 9px, transparent 13px, #1848c8 13px); }
.redmark::after { width: 5px; margin-left: 36px; background: #d03020; }
.greenmark::after { background: #109848; }
.doc::after { width: 30px; border: 1px solid #555; background: #ddd; }
.light { background: linear-gradient(90deg, #e0e0e4, #a8acb4); }
.taskbar time { margin: 2px 38px 0 auto; color: #fff; font: 12px/12px "Open Sans", sans-serif; }
```
